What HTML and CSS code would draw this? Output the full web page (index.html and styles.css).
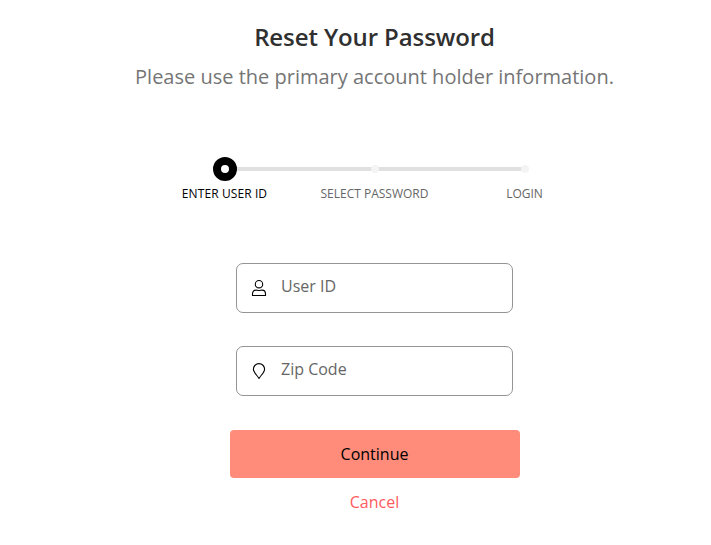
FILE: index.html
```html
<!DOCTYPE html>
<html lang="en">
<head>
<meta charset="utf-8">
<title>Reset Your Password</title>
<link rel="stylesheet" href="styles.css">
</head>
<body>
<main class="page">
  <h1 class="title">Reset Your Password</h1>
  <p class="subtitle">Please use the primary account holder information.</p>
  <ol class="steps">
    <li class="step active"><span class="dot"></span><span class="label">ENTER USER ID</span></li>
    <li class="step"><span class="dot"></span><span class="label">SELECT PASSWORD</span></li>
    <li class="step"><span class="dot"></span><span class="label">LOGIN</span></li>
  </ol>
  <form class="form">
    <label class="field">
      <svg class="icon" viewBox="0 0 16 18" fill="none" stroke="#000" stroke-width="1.1"><circle cx="8" cy="5.200" r="3.700"/><path d="M1.500 16.500v-1.500q0-3.900 3.500-3.900c1.200 0 1.500.4 3 .4s1.800-.4 3-.4q3.500 0 3.500 3.900v1.500z" stroke-linejoin="round"/></svg>
      <input class="input" type="text" placeholder="User ID">
    </label>
    <label class="field">
      <svg class="icon" viewBox="0 0 16 18" fill="none" stroke="#000" stroke-width="1.1"><path d="M8 16.500C6.200 13.400 2.400 10.200 2.400 7.200a5.600 5.600 0 0 1 11.200 0C13.600 10.200 9.800 13.400 8 16.500z" stroke-linejoin="round"/></svg>
      <input class="input" type="text" placeholder="Zip Code">
    </label>
    <button class="submit" type="button">Continue</button>
    <a class="cancel">Cancel</a>
  </form>
</main>
</body>
</html>
```
FILE: styles.css
```css
* { box-sizing: border-box; }
body { margin: 0; background: #fff; font-family: "Open Sans", sans-serif; }
.page { padding: 20px 0 0 39px; display: flex; flex-direction: column; align-items: center; }
.title { margin: 0 1px 0 0; font-size: 24px; line-height: 34px; font-weight: 600; letter-spacing: -0.1px; color: #303030; }
.subtitle { margin: 9px 1px 0 0; font-size: 20px; line-height: 28px; color: #757575; }
.steps { display: flex; list-style: none; margin: 66px 0 0; padding: 0; }
.step { width: 150px; display: flex; flex-direction: column; align-items: center; position: relative; }
.step + .step::before { content: ""; position: absolute; top: 10px; right: 50%; width: 150px; height: 4px; background: #e0e0e0; }
.dot { width: 8px; height: 8px; margin: 8px 0; border-radius: 50%; background: #f4f4f4; position: relative; z-index: 1; }
.active .dot { width: 24px; height: 24px; margin: 0; border: 8px solid #000; background: #fff; z-index: 2; }
.label { margin: 4px 1px 0 0; font-size: 12px; line-height: 17px; color: #666; white-space: nowrap; }
.active .label { color: #000; letter-spacing: 0.1px; }
.form { width: 290px; margin-top: 61px; display: flex; flex-direction: column; align-items: center; }
.field { width: 277px; height: 50px; margin: 0 1px 33px 0; border: 1px solid #949494; border-radius: 7px; display: flex; align-items: center; padding-left: 14px; }
.icon { width: 16px; height: 18px; flex: none; }
.input { width: 220px; border: 0; padding: 0; margin: -4px 0 0 14px; background: none; font: 16px/22px "Open Sans", sans-serif; outline: 0; }
.input::placeholder { color: #666; opacity: 1; }
.submit { width: 290px; height: 48px; margin-top: 1px; padding: 0 1px 0 0; border: 0; border-radius: 4px; background: #ff8c7a; color: #000; font: 16px/22px "Open Sans", sans-serif; }
.cancel { margin: 13px 1px 0 0; font-size: 16px; line-height: 22px; color: #ff5a60; }
```
